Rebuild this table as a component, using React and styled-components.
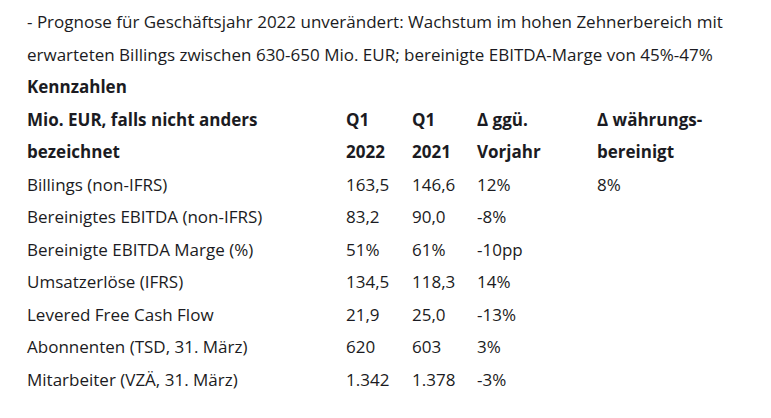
import React from "react";
import styled, { createGlobalStyle } from "styled-components";

const Global = createGlobalStyle`
  html, body { margin: 0; padding: 0; background: #fff; }
  body {
    font-family: "Open Sans", "Noto Sans", sans-serif;
    font-size: 17px;
    color: #1b1b22;
  }
`;

const Page = styled.div`
  padding: 6px 0 0 27px;
  width: 744px;
  line-height: 32.5px;
`;

const Para = styled.p`
  margin: 0;
  width: 740px;
`;

const Heading = styled.div`
  font-weight: 700;
`;

const Table = styled.table`
  border-collapse: collapse;
  table-layout: fixed;
  width: 720px;
`;

const Col = styled.col`
  width: ${(p) => p.$w}px;
`;

const Th = styled.th`
  padding: 0;
  text-align: left;
  vertical-align: top;
  font-weight: 700;
  white-space: nowrap;
`;

const Td = styled.td`
  padding: 0;
  text-align: left;
  white-space: nowrap;
`;

const rows = [
  ["Billings (non-IFRS)", "163,5", "146,6", "12%", "8%"],
  ["Bereinigtes EBITDA (non-IFRS)", "83,2", "90,0", "-8%", ""],
  ["Bereinigte EBITDA Marge (%)", "51%", "61%", "-10pp", ""],
  ["Umsatzerlöse (IFRS)", "134,5", "118,3", "14%", ""],
  ["Levered Free Cash Flow", "21,9", "25,0", "-13%", ""],
  ["Abonnenten (TSD, 31. März)", "620", "603", "3%", ""],
  ["Mitarbeiter (VZÄ, 31. März)", "1.342", "1.378", "-3%", ""],
];

export default function App() {
  return (
    <>
      <Global />
      <Page>
        <Para>
          - Prognose für Geschäftsjahr 2022 unverändert: Wachstum im hohen
          Zehnerbereich mit erwarteten Billings zwischen 630-650 Mio. EUR;
          bereinigte EBITDA-Marge von 45%-47%
        </Para>
        <Heading>Kennzahlen</Heading>
        <Table>
          <colgroup>
            <Col $w={319} />
            <Col $w={66} />
            <Col $w={65} />
            <Col $w={120} />
            <Col $w={150} />
          </colgroup>
          <thead>
            <tr>
              <Th>
                Mio. EUR, falls nicht anders
                <br />
                bezeichnet
              </Th>
              <Th>
                Q1
                <br />
                2022
              </Th>
              <Th>
                Q1
                <br />
                2021
              </Th>
              <Th>
                Δ ggü.
                <br />
                Vorjahr
              </Th>
              <Th>
                Δ währungs-
                <br />
                bereinigt
              </Th>
            </tr>
          </thead>
          <tbody>
            {rows.map((r) => (
              <tr key={r[0]}>
                {r.map((c, i) => (
                  <Td key={i}>{c}</Td>
                ))}
              </tr>
            ))}
          </tbody>
        </Table>
      </Page>
    </>
  );
}
